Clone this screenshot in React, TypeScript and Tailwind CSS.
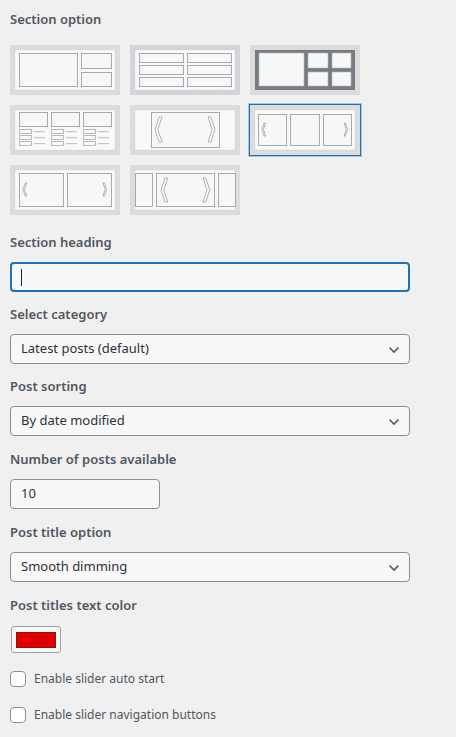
import React from "react";

const FONT = { fontFamily: '"Segoe UI", "Noto Sans", "Open Sans", sans-serif' };

const line = "#a7aaad";

function Chevron({ x, y, h, dir }: { x: number; y: number; h: number; dir: "l" | "r" }) {
  const w = h * 0.28;
  const m = y + h / 2;
  const pts =
    dir === "l"
      ? [[x + w, y], [x + w * 0.4, m], [x + w, y + h], [x + w * 0.6, y + h], [x, m], [x + w * 0.6, y]]
      : [[x, y], [x + w * 0.6, m], [x, y + h], [x + w * 0.4, y + h], [x + w, m], [x + w * 0.4, y]];
  return <polygon points={pts.map((p) => p.join(",")).join(" ")} fill="#fff" stroke="#9a9da1" strokeWidth="0.8" />;
}

function Frame({ children, outer = "#dcdcde" }: { children: React.ReactNode; outer?: string }) {
  return (
    <svg width="110" height="50" viewBox="0 0 110 50" className="block">
      <rect x="0" y="0" width="110" height="50" fill={outer} />
      <rect x="5" y="5" width="100" height="40" fill="#f9f9f9" stroke="#cfcfd2" strokeWidth="0.6" strokeDasharray="1.2 1.2" />
      {children}
    </svg>
  );
}

const Box = ({ x, y, w, h }: { x: number; y: number; w: number; h: number }) => (
  <rect x={x + 0.5} y={y + 0.5} width={w} height={h} fill="#f6f7f7" stroke={line} strokeWidth="1" />
);

const thumbs: React.ReactNode[] = [
  <Frame key="1">
    <Box x={9} y={8} w={58} h={33} />
    <Box x={71} y={8} w={30} h={15} />
    <Box x={71} y={27} w={30} h={14} />
  </Frame>,
  <Frame key="2" outer="#d4d4da">
    {[8, 20, 32].map((y) => (
      <g key={y}>
        <Box x={9} y={y} w={44} h={9} />
        <Box x={57} y={y} w={44} h={9} />
      </g>
    ))}
  </Frame>,
  <Frame key="3">
    <rect x="5" y="5" width="100" height="40" fill="#787c82" />
    <rect x="9" y="8" width="45" height="33" fill="#f6f7f7" stroke="#b4b6b9" strokeWidth="0.6" />
    <rect x="58" y="8" width="20" height="15" fill="#f6f7f7" stroke="#b4b6b9" strokeWidth="0.6" />
    <rect x="82" y="8" width="19" height="15" fill="#f6f7f7" stroke="#b4b6b9" strokeWidth="0.6" />
    <rect x="58" y="27" width="20" height="14" fill="#f6f7f7" stroke="#b4b6b9" strokeWidth="0.6" />
    <rect x="82" y="27" width="19" height="14" fill="#f6f7f7" stroke="#b4b6b9" strokeWidth="0.6" />
  </Frame>,
  <Frame key="4">
    {[9, 41, 73].map((x) => (
      <g key={x}>
        <Box x={x} y={7} w={28} h={14} />
        {[24, 30, 36].map((y) => (
          <g key={y}>
            <rect x={x + 0.5} y={y + 0.5} width="12" height="4" fill="#f6f7f7" stroke={line} strokeWidth="0.8" />
            <rect x={x + 15} y={y + 2} width="11" height="1.2" fill="#c3c4c7" />
          </g>
        ))}
      </g>
    ))}
  </Frame>,
  <Frame key="5">
    <Box x={21} y={7} w={68} h={35} />
    <Chevron x={25} y={12} h={25} dir="l" />
    <Chevron x={78} y={12} h={25} dir="r" />
  </Frame>,
  <Frame key="6">
    <Box x={8} y={9} w={28} h={31} />
    <Box x={40} y={9} w={29} h={31} />
    <Box x={73} y={9} w={28} h={31} />
    <Chevron x={12} y={18} h={13} dir="l" />
    <Chevron x={94} y={18} h={13} dir="r" />
  </Frame>,
  <Frame key="7">
    <Box x={9} y={8} w={44} h={33} />
    <Box x={57} y={8} w={44} h={33} />
    <Chevron x={13} y={18} h={13} dir="l" />
    <Chevron x={93} y={18} h={13} dir="r" />
  </Frame>,
  <Frame key="8">
    <Box x={5} y={8} w={17} h={33} />
    <Box x={26} y={8} w={58} h={33} />
    <Box x={88} y={8} w={17} h={33} />
    <Chevron x={31} y={13} h={24} dir="l" />
    <Chevron x={73} y={13} h={24} dir="r" />
  </Frame>,
];

function Label({ children }: { children: React.ReactNode }) {
  return <div className="text-[13px] font-semibold leading-5 text-[#50575e]">{children}</div>;
}

function Select({ value }: { value: string }) {
  return (
    <div className="relative mt-[10px] flex h-[30px] w-[400px] items-center rounded-[4px] border border-[#8c8f94] bg-[#f8f8f8] pl-[10px] text-[13px] text-[#2c3338]">
      {value}
      <svg width="12" height="8" viewBox="0 0 12 8" className="absolute right-[9px] top-[11px]">
        <path d="M1.5 1.5 L6 6 L10.5 1.5" fill="none" stroke="#50575e" strokeWidth="1.6" />
      </svg>
    </div>
  );
}

function Check({ label }: { label: string }) {
  return (
    <div className="flex h-4 items-center gap-2">
      <div className="h-4 w-4 rounded-[4px] border border-[#8c8f94] bg-white" />
      <span className="text-[12px] leading-4 text-[#50575e]">{label}</span>
    </div>
  );
}

export default function App() {
  return (
    <div className="min-h-[737px] w-[456px] bg-[#f0f0f1] pl-[10px] pt-[9px]" style={FONT}>
      <Label>Section option</Label>
      <div className="mt-4 grid w-[350px] grid-cols-[110px_110px_110px] gap-[10px]">
        {thumbs.map((t, i) => (
          <div
            key={i}
            className={
              i === 5
                ? "outline outline-1 outline-[#2271b1] shadow-[0_0_0_2px_rgba(34,113,177,0.35)]"
                : ""
            }
          >
            {t}
          </div>
        ))}
      </div>

      <div className="mt-[17px]">
        <Label>Section heading</Label>
        <div className="mt-[10px] flex h-[30px] w-[400px] items-center rounded-[4px] border-2 border-[#2271b1] bg-[#f8f8f8] pl-[9px]">
          <div className="h-[17px] w-px bg-[#1d2327]" />
        </div>
      </div>

      <div className="mt-3">
        <Label>Select category</Label>
        <Select value="Latest posts (default)" />
      </div>

      <div className="mt-3">
        <Label>Post sorting</Label>
        <Select value="By date modified" />
      </div>

      <div className="mt-[13px]">
        <Label>Number of posts available</Label>
        <div className="mt-[10px] flex h-[30px] w-[150px] items-center rounded-[4px] border border-[#8c8f94] bg-[#f8f8f8] pl-[10px] text-[13px] text-[#2c3338]">
          10
        </div>
      </div>

      <div className="mt-[13px]">
        <Label>Post title option</Label>
        <Select value="Smooth dimming" />
      </div>

      <div className="mt-[13px]">
        <Label>Post titles text color</Label>
        <div className="ml-px mt-[11px] flex h-[27px] w-[50px] items-center justify-center rounded-[3px] border border-[#a0a0a0] bg-[#f6f7f7]">
          <div className="h-4 w-10 border border-[#8c1010] bg-[#e00000]" />
        </div>
      </div>

      <div className="mt-[18px] flex flex-col gap-5">
        <Check label="Enable slider auto start" />
        <Check label="Enable slider navigation buttons" />
      </div>
    </div>
  );
}
